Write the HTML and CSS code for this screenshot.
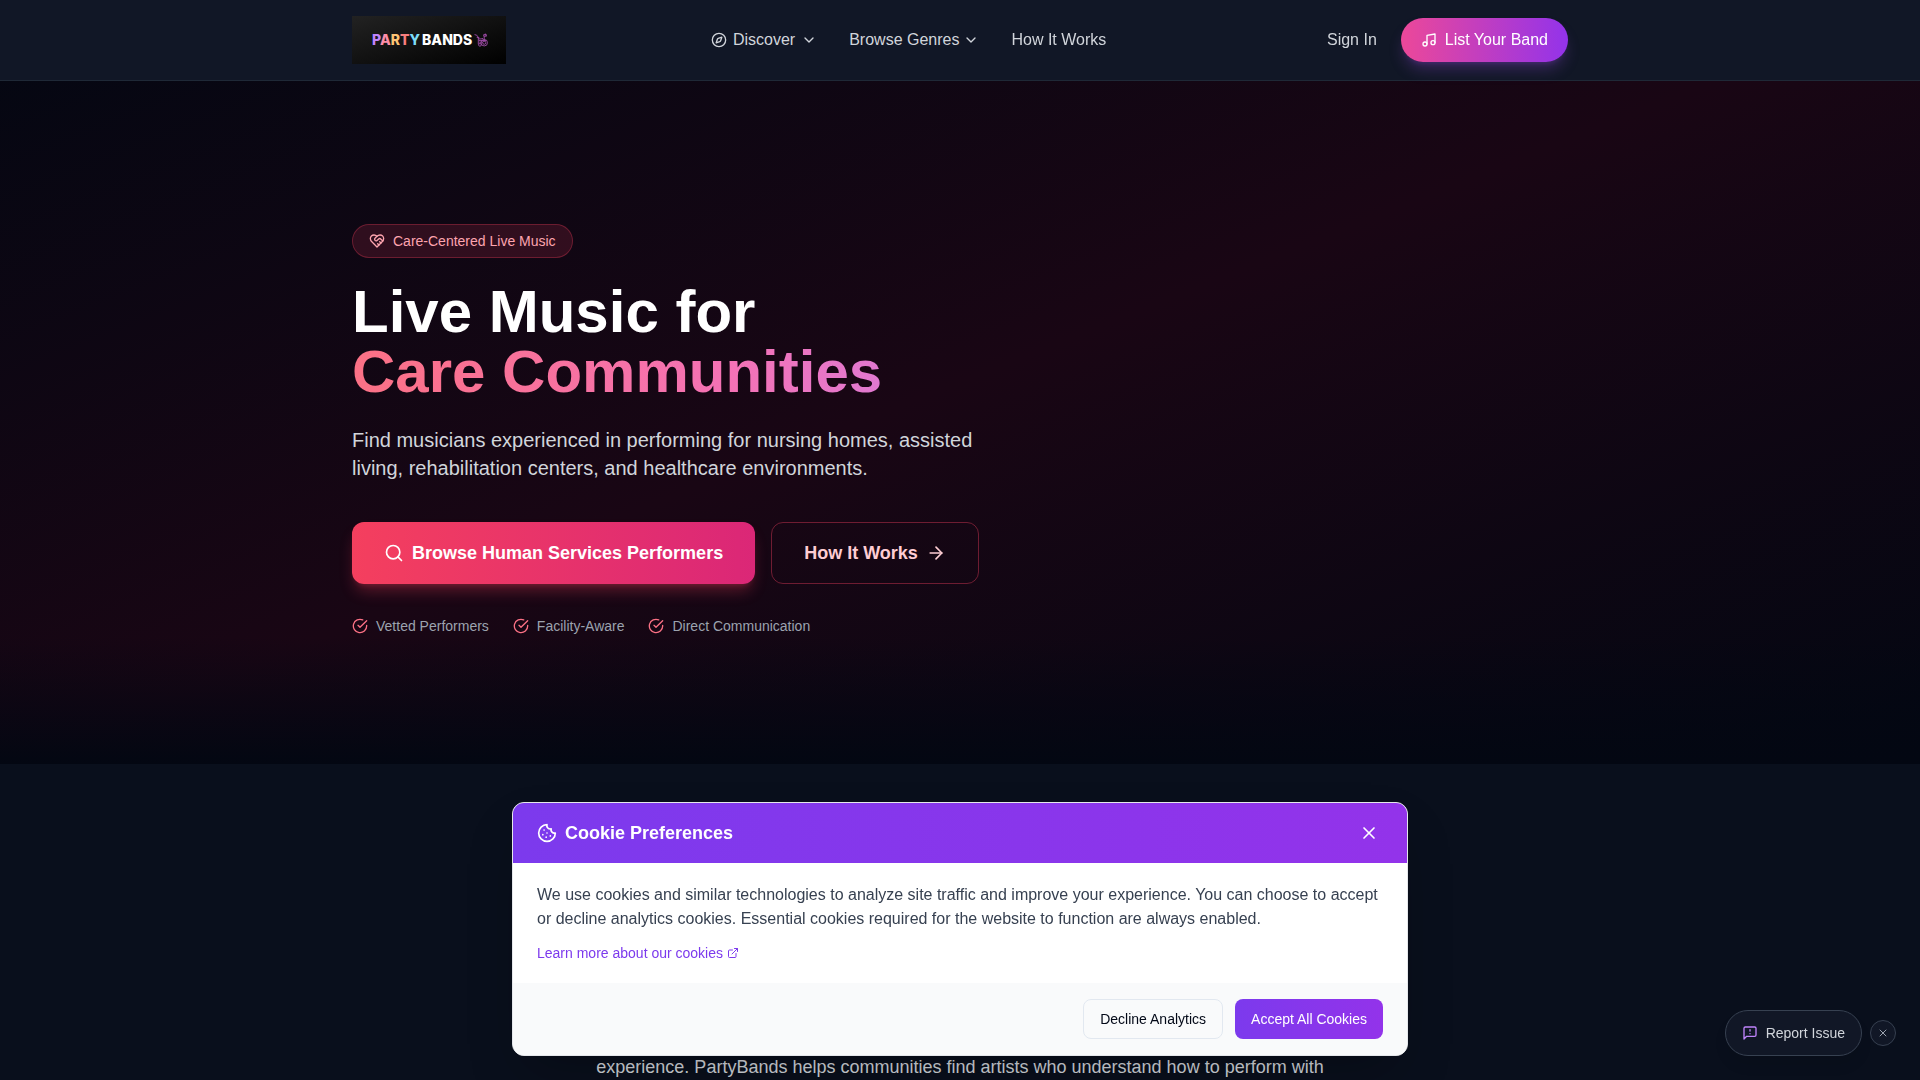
FILE: index.html
```html
<!DOCTYPE html>
<html lang="en">
<head>
  <meta charset="UTF-8">
  <meta name="viewport" content="width=device-width, initial-scale=1.0">
  <title>PartyBands</title>
  <link rel="stylesheet" href="styles.css">
</head>
<body>
  <header class="site-header">
    <div class="container header-row">
      <a class="logo" href="#" aria-label="PartyBands home">
        <span class="logo-party"><span class="c-purple">P</span><span class="c-pink">A</span><span class="c-orange">R</span><span class="c-red">T</span><span class="c-cyan">Y</span></span>
        <span class="logo-bands">BANDS</span>
        <svg class="logo-icon" viewBox="0 0 26 26" fill="none" stroke="currentColor" stroke-width="1.6">
          <path d="M1 3l4 1 3 4v13M5 8l5 1M19 6v10M8 11h5l4-1M9 14h14M10 17h6M21 1v4M18 3h5v3h-5z"/>
          <circle cx="19" cy="18" r="6"/>
          <circle cx="19" cy="18" r="3"/>
          <circle cx="11" cy="22" r="2.5"/>
        </svg>
      </a>

      <nav class="main-nav">
        <button class="nav-item nav-discover" type="button">
          <svg class="icon icon-16" viewBox="0 0 24 24"><circle cx="12" cy="12" r="10"/><path d="m16.24 7.76-1.804 5.411a2 2 0 0 1-1.265 1.265L7.76 16.24l1.804-5.411a2 2 0 0 1 1.265-1.265z"/></svg>
          Discover
          <svg class="icon icon-16" viewBox="0 0 24 24"><path d="m6 9 6 6 6-6"/></svg>
        </button>
        <button class="nav-item" type="button">
          Browse Genres
          <svg class="icon icon-16" viewBox="0 0 24 24"><path d="m6 9 6 6 6-6"/></svg>
        </button>
        <a class="nav-item" href="#how">How It Works</a>
      </nav>

      <div class="header-actions">
        <a class="nav-item" href="#signin">Sign In</a>
        <a class="list-btn" href="#list">
          <svg class="icon icon-16" viewBox="0 0 24 24"><path d="M9 18V5l12-2v13"/><circle cx="6" cy="18" r="3"/><circle cx="18" cy="16" r="3"/></svg>
          List Your Band
        </a>
      </div>
    </div>
  </header>

  <main>
    <section class="hero">
      <div class="container">
        <div class="hero-content">
          <div class="badge">
            <svg class="icon icon-16" viewBox="0 0 24 24"><path d="M19 14c1.49-1.46 3-3.21 3-5.5A5.5 5.5 0 0 0 16.5 3c-1.76 0-3 .5-4.5 2-1.5-1.5-2.74-2-4.5-2A5.5 5.5 0 0 0 2 8.5c0 2.3 1.5 4.05 3 5.5l7 7Z"/><path d="M12 5 9.04 7.96a2.17 2.17 0 0 0 0 3.08c.82.82 2.13.85 3 .07l2.07-1.9a2.82 2.82 0 0 1 3.79 0l2.96 2.66"/><path d="m18 15-2-2"/><path d="m15 18-2-2"/></svg>
            Care-Centered Live Music
          </div>
          <h1 class="hero-title">Live Music for <span class="hero-accent">Care Communities</span></h1>
          <p class="hero-text">Find musicians experienced in performing for nursing homes, assisted living, rehabilitation centers, and healthcare environments.</p>
          <div class="hero-buttons">
            <a class="btn btn-browse" href="#browse">
              <svg class="icon icon-20" viewBox="0 0 24 24"><circle cx="11" cy="11" r="8"/><path d="m21 21-4.3-4.3"/></svg>
              Browse Human Services Performers
            </a>
            <a class="btn btn-how" href="#how">
              How It Works
              <svg class="icon icon-20" viewBox="0 0 24 24"><path d="M5 12h14"/><path d="m12 5 7 7-7 7"/></svg>
            </a>
          </div>
          <ul class="hero-points">
            <li><svg class="icon icon-16" viewBox="0 0 24 24"><path d="M22 11.08V12a10 10 0 1 1-5.93-9.14"/><path d="m9 11 3 3L22 4"/></svg>Vetted Performers</li>
            <li><svg class="icon icon-16" viewBox="0 0 24 24"><path d="M22 11.08V12a10 10 0 1 1-5.93-9.14"/><path d="m9 11 3 3L22 4"/></svg>Facility-Aware</li>
            <li><svg class="icon icon-16" viewBox="0 0 24 24"><path d="M22 11.08V12a10 10 0 1 1-5.93-9.14"/><path d="m9 11 3 3L22 4"/></svg>Direct Communication</li>
          </ul>
        </div>
      </div>
    </section>

    <section class="about">
      <p class="about-text">experience. PartyBands helps communities find artists who understand how to perform with</p>
    </section>
  </main>

  <div class="cookie" role="dialog" aria-labelledby="cookie-title">
    <div class="cookie-head">
      <svg class="icon icon-20" viewBox="0 0 24 24"><path d="M12 2a10 10 0 1 0 10 10 4 4 0 0 1-5-5 4 4 0 0 1-5-5"/><path d="M8.5 8.5v.01"/><path d="M16 15.5v.01"/><path d="M12 12v.01"/><path d="M11 17v.01"/><path d="M7 14v.01"/></svg>
      <h2 class="cookie-title" id="cookie-title">Cookie Preferences</h2>
      <button class="cookie-close" type="button" aria-label="Close">
        <svg class="icon icon-20" viewBox="0 0 24 24"><path d="M18 6 6 18"/><path d="m6 6 12 12"/></svg>
      </button>
    </div>
    <div class="cookie-body">
      <p class="cookie-text">We use cookies and similar technologies to analyze site traffic and improve your experience. You can choose to accept or decline analytics cookies. Essential cookies required for the website to function are always enabled.</p>
      <a class="cookie-link" href="#cookies">
        Learn more about our cookies
        <svg class="icon icon-12" viewBox="0 0 24 24"><path d="M15 3h6v6"/><path d="M10 14 21 3"/><path d="M18 13v6a2 2 0 0 1-2 2H5a2 2 0 0 1-2-2V8a2 2 0 0 1 2-2h6"/></svg>
      </a>
    </div>
    <div class="cookie-foot">
      <button class="cookie-btn decline" type="button">Decline Analytics</button>
      <button class="cookie-btn accept" type="button">Accept All Cookies</button>
    </div>
  </div>

  <div class="report">
    <button class="report-btn" type="button">
      <svg class="icon icon-16" viewBox="0 0 24 24"><path d="M21 15a2 2 0 0 1-2 2H7l-4 4V5a2 2 0 0 1 2-2h14a2 2 0 0 1 2 2z"/><path d="M12 7v2"/><path d="M12 13h.01"/></svg>
      Report Issue
    </button>
    <button class="report-close" type="button" aria-label="Hide report button">
      <svg class="icon icon-12" viewBox="0 0 24 24"><path d="M18 6 6 18"/><path d="m6 6 12 12"/></svg>
    </button>
  </div>
</body>
</html>
```
FILE: styles.css
```css
:root {
  --bg: #090f1c;
  --hero: #030712;
  --panel: #111726;
  --text: #d1d5db;
  --muted: #9ca3af;
  --rose: #fb7185;
  --violet: #7c3aed;
  --purple: #9333ea;
  --font: "Liberation Sans", Arial, sans-serif;
}
* {
  box-sizing: border-box;
}
body {
  margin: 0;
  font-family: var(--font);
  font-size: 16px;
  line-height: 24px;
  background: var(--bg);
  color: var(--text);
}
h1, h2, p, ul {
  margin: 0;
  padding: 0;
}
a {
  color: inherit;
  text-decoration: none;
}
button {
  font: inherit;
  color: inherit;
  background: none;
  border: none;
  padding: 0;
  cursor: pointer;
}
.container {
  max-width: 1280px;
  margin: 0 auto;
  padding: 0 32px;
}

/* icons */
.icon {
  flex: none;
  fill: none;
  stroke: currentColor;
  stroke-width: 2;
  stroke-linecap: round;
  stroke-linejoin: round;
}
.icon-12 {
  width: 12px;
  height: 12px;
}
.icon-16 {
  width: 16px;
  height: 16px;
}
.icon-20 {
  width: 20px;
  height: 20px;
}

/* header */
.site-header {
  position: fixed;
  top: 0;
  left: 0;
  right: 0;
  z-index: 10;
  background: var(--panel);
  border-bottom: 1px solid #1f2937;
}
.header-row {
  display: flex;
  align-items: center;
  justify-content: space-between;
  padding-top: 16px;
  padding-bottom: 16px;
}
.logo {
  display: flex;
  align-items: center;
  gap: 2px;
  height: 48px;
  padding: 0 18px 0 20px;
  background: linear-gradient(to bottom right, #222, #000);
  font-family: Inter, sans-serif;
  font-size: 14px;
  font-weight: 800;
  color: #fff;
}
.logo-icon {
  width: 14px;
  height: 14px;
  color: #a64fb0;
}
.c-purple { color: #c084fc; }
.c-pink { color: #fb8da8; }
.c-orange { color: #fdc374; }
.c-red { color: #f87f7f; }
.c-cyan { color: #7ddcf8; }
.main-nav {
  display: flex;
  gap: 32px;
}
.nav-item {
  display: flex;
  align-items: center;
  gap: 4px;
}
.nav-discover {
  gap: 6px;
}
.header-actions {
  display: flex;
  align-items: center;
  gap: 24px;
  padding-left: 16px;
}
.list-btn {
  display: flex;
  align-items: center;
  gap: 8px;
  padding: 10px 20px;
  border-radius: 22px;
  background: linear-gradient(to right, #ec4899, var(--purple));
  color: #fff;
  box-shadow: 0 10px 15px -3px rgba(168, 85, 247, 0.25), 0 4px 6px -4px rgba(168, 85, 247, 0.25);
}

/* hero, runs up behind the fixed header */
.hero {
  padding: 224px 0 128px;
  background:
    linear-gradient(to top, var(--hero), transparent 128px),
    linear-gradient(to bottom right, var(--hero), #190614, var(--hero));
}
.hero-content {
  max-width: 768px;
}
.badge {
  display: flex;
  width: fit-content;
  align-items: center;
  gap: 8px;
  padding: 6px 16px;
  border: 1px solid rgba(244, 63, 94, 0.3);
  border-radius: 17px;
  background: rgba(244, 63, 94, 0.15);
  color: #fda4af;
  font-size: 14px;
  line-height: 20px;
}
.hero-title {
  margin-top: 24px;
  font-size: 60px;
  line-height: 60px;
  font-weight: 700;
  color: #fff;
}
.hero-accent {
  display: block;
  background: linear-gradient(to right, #fb7185, #f472b6, #c084fc);
  -webkit-background-clip: text;
  background-clip: text;
  color: transparent;
}
.hero-text {
  max-width: 672px;
  margin-top: 24px;
  font-size: 20px;
  line-height: 28px;
}
.hero-buttons {
  display: flex;
  gap: 16px;
  margin-top: 40px;
}
.btn {
  display: flex;
  align-items: center;
  gap: 8px;
  padding: 16px 32px;
  border-radius: 12px;
  font-size: 18px;
  line-height: 28px;
  font-weight: 700;
}
.btn-browse {
  background: linear-gradient(to right, #f43f5e, #db2777);
  color: #fff;
  box-shadow: 0 10px 15px -3px rgba(244, 63, 94, 0.3), 0 4px 6px -4px rgba(244, 63, 94, 0.3);
}
.btn-how {
  border: 1px solid rgba(244, 63, 94, 0.4);
  color: #fecdd3;
}
.hero-points {
  display: flex;
  gap: 24px;
  margin-top: 32px;
  list-style: none;
  font-size: 14px;
  line-height: 20px;
  color: var(--muted);
}
.hero-points li {
  display: flex;
  align-items: center;
  gap: 8px;
}
.hero-points .icon {
  color: var(--rose);
}

/* about */
.about {
  padding-top: 288px;
}
.about-text {
  max-width: 768px;
  margin: 0 auto;
  font-size: 18px;
  line-height: 30px;
  text-align: center;
}

/* cookie dialog */
.cookie {
  position: fixed;
  left: 16px;
  right: 16px;
  bottom: 24px;
  z-index: 20;
  max-width: 896px;
  margin: 0 auto;
  overflow: hidden;
  border: 1px solid #e5e7eb;
  border-radius: 12px;
  background: #fff;
  box-shadow: 0 25px 50px -12px rgba(0, 0, 0, 0.25);
}
.cookie-head {
  display: flex;
  align-items: center;
  gap: 8px;
  padding: 16px 24px;
  background: linear-gradient(to right, var(--violet), var(--purple));
  color: #fff;
}
.cookie-title {
  flex: 1;
  font-size: 18px;
  line-height: 28px;
  font-weight: 700;
}
.cookie-close {
  display: flex;
  padding: 4px;
}
.cookie-body {
  padding: 20px 24px;
}
.cookie-text {
  color: #374151;
}
.cookie-link {
  display: flex;
  width: fit-content;
  align-items: center;
  gap: 4px;
  margin-top: 12px;
  font-size: 14px;
  line-height: 20px;
  color: var(--violet);
}
.cookie-foot {
  display: flex;
  justify-content: flex-end;
  gap: 12px;
  padding: 16px 24px;
  background: #f9fafb;
}
.cookie-btn {
  padding: 9px 16px;
  border: 1px solid #e2e8f0;
  border-radius: 8px;
  font-size: 14px;
  line-height: 20px;
  color: #020817;
}
.cookie-btn.accept {
  padding: 10px 16px;
  border: none;
  background: linear-gradient(to right, var(--violet), var(--purple));
  color: #fff;
}

/* report widget */
.report {
  position: fixed;
  right: 24px;
  bottom: 24px;
  z-index: 20;
  display: flex;
  align-items: center;
  gap: 8px;
}
.report-btn {
  display: flex;
  align-items: center;
  gap: 8px;
  padding: 12px 16px;
  border: 1px solid #374151;
  border-radius: 23px;
  background: var(--panel);
  font-size: 14px;
  line-height: 20px;
  box-shadow: 0 10px 15px -3px rgba(0, 0, 0, 0.1);
}
.report-btn .icon {
  color: #c084fc;
}
.report-close {
  display: flex;
  padding: 6px;
  border: 1px solid #374151;
  border-radius: 50%;
  background: var(--panel);
  color: var(--muted);
}
```
